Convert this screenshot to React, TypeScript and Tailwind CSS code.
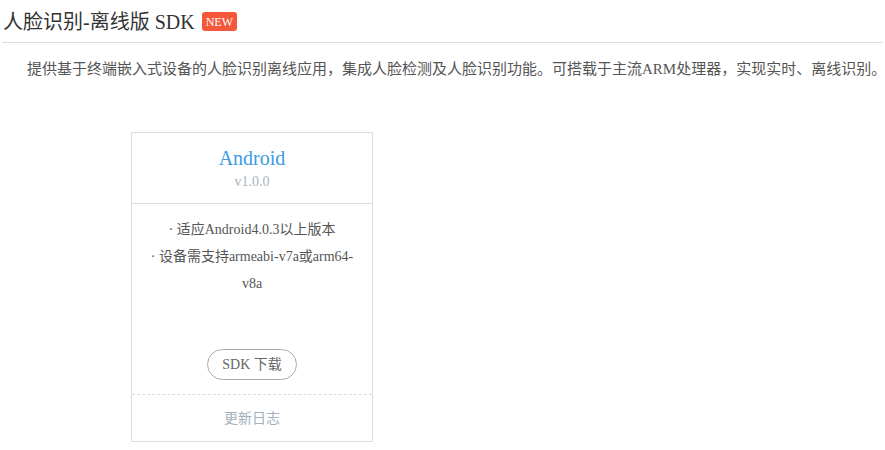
export default function App() {
  const font = { fontFamily: '"Liberation Serif", "Noto Sans CJK SC", serif' };
  return (
    <div className="w-[885px] h-[450px] bg-white overflow-hidden" style={font}>
      <div className="flex items-center h-[43px] pl-[1px] pt-[1px] mx-[2px] border-b border-[#dddddd]">
        <span className="text-[20px] leading-[28px] text-[#333333]">人脸识别-离线版 SDK</span>
        <span className="ml-[7px] px-[4px] h-[19px] flex items-center rounded-[3px] bg-[#f4573a] text-white text-[12px] leading-none">NEW</span>
      </div>
      <p className="pl-[27px] pt-[15px] text-[15px] leading-[22px] text-[#555555] whitespace-nowrap">
        提供基于终端嵌入式设备的人脸识别离线应用，集成人脸检测及人脸识别功能。可搭载于主流ARM处理器，实现实时、离线识别。
      </p>
      <div className="ml-[131px] mt-[52px] w-[242px] border border-[#dddddd] flex flex-col">
        <div className="flex flex-col items-center pt-[11px] pb-[11px] border-b border-[#dddddd]">
          <div className="text-[20px] leading-[28px] text-[#3a9be2]">Android</div>
          <div className="text-[14px] leading-[20px] text-[#a9b3bf]">v1.0.0</div>
        </div>
        <div className="h-[191px] flex flex-col justify-between items-center px-[15px] pt-[12px] pb-[14px] border-b border-dashed border-[#dddddd]">
          <div className="text-[14px] leading-[27px] text-[#555555] text-center">
            <div>· 适应Android4.0.3以上版本</div>
            <div>· 设备需支持armeabi-v7a或arm64-v8a</div>
          </div>
          <div className="w-[90px] h-[31px] rounded-full border border-[#aaaaaa] flex items-center justify-center text-[14px] text-[#666666]">
            SDK 下载
          </div>
        </div>
        <div className="h-[46px] flex items-center justify-center text-[14px] text-[#a3afbd]">更新日志</div>
      </div>
    </div>
  );
}
